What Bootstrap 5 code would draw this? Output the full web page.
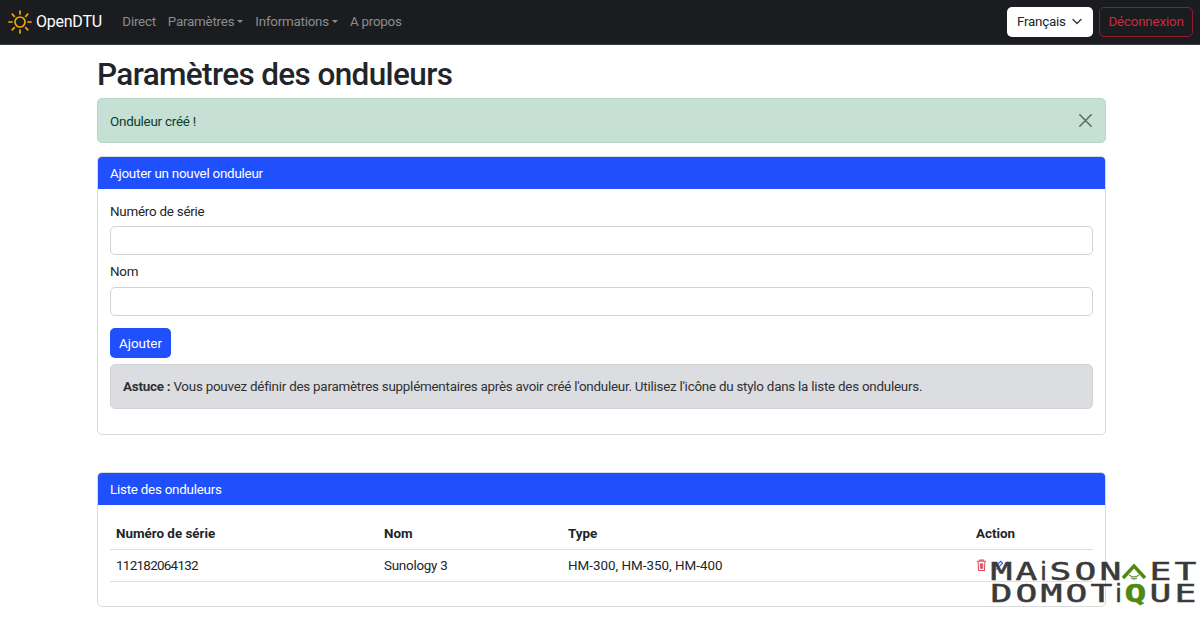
<!DOCTYPE html>
<html lang="fr">
<head>
<meta charset="utf-8">
<title>OpenDTU</title>
<link href="https://cdn.jsdelivr.net/npm/bootstrap@5.3.0/dist/css/bootstrap.min.css" rel="stylesheet">
<style>
html,body{height:626px;overflow:hidden}
body{font-family:"Roboto","Inter","Liberation Sans",sans-serif;font-size:13.4px;letter-spacing:-.24px;color:#212529;position:relative}
.top-bar{background:#1b1c20;height:44.5px;padding:0 7px 0 8px;border-bottom:1px solid #3a3b3e}
.brand-txt{color:#fff;font-size:16px;margin-left:4px;margin-right:14.5px}
.top-link{color:#8b8c8f;text-decoration:none;padding:0 6px}
.top-link.dropdown-toggle::after{margin-left:3px;border-width:.24em .24em 0 .24em;vertical-align:.2em}
.lang-sel{width:86px;height:30px;background:#fff;border-radius:5px;padding:0 11px 0 10px;color:#212529}
.logout-btn{width:94px;height:30px;margin-left:6px;border:1px solid #8e1c2c;border-radius:5px;color:#c92a3e;font-size:13.4px;letter-spacing:-.2px;padding:0}
.page-wrap{width:1009px;margin-left:97px}
.page-title{font-size:31.5px;font-weight:500;line-height:38px;margin:11px 0 4px;color:#212529;letter-spacing:-.62px}
.ok-alert{height:45px;background:#c7e0d5;border:1px solid #b5d6c8;border-radius:5px;color:#0b3d27;padding:0 12px;margin-bottom:13px}
.ok-alert>span{padding-top:4px}
.x-btn{background:none;border:0;padding:0;line-height:0;margin-right:1px}
.panel{border:1px solid #d9dadb;border-radius:5px;overflow:hidden}
.panel-head{background:#1f50fb;color:#fff;height:32px;padding:4px 12px 0;margin:0}
.panel-form{height:245px;padding:12px 12px 0}
.panel-list{height:135px;margin-top:37px}
.fld-label{display:block;line-height:22px;margin-bottom:3px}
.fld-input{display:block;height:29px;width:100%;border:1px solid #d0d3d6;border-radius:5px;margin-bottom:6px;padding:0 10px;font-size:13.4px}
.fld-input + .fld-label{margin-bottom:4px}
.add-btn{background:#1f50fb;color:#fff;border:0;border-radius:5px;width:61px;height:30px;font-size:13.4px;padding:3px 0 0;margin-top:12px;display:block}
.tip-box{background:#dcdde0;border:1px solid #d2d3d6;border-radius:5px;height:45px;margin-top:6px;padding:3px 12px 0;color:#2f3133}
.tbl-wrap{padding:13px 12px 0}
.tbl-grid{display:grid;grid-template-columns:268px 184px 408px 1fr}
.tbl-grid>div{padding:2px 6px 0;height:32px;display:flex;align-items:center;border-bottom:1px solid #dee0e2}
.tbl-grid>.hd{font-weight:700;height:32px;letter-spacing:0;border-bottom:1.5px solid #dcdde0}
.cell-num{letter-spacing:-.7px}
.cell-type{letter-spacing:0}
.action-icons{gap:6px;margin-top:-2px}
.wm{position:absolute;left:990px;top:562px;width:207px;color:#3a3a3a;font-family:"DejaVu Sans Mono","Liberation Mono",monospace;pointer-events:none;letter-spacing:0}
.wm-line{display:flex;justify-content:space-between;height:21.5px;font-size:25px;line-height:19px;-webkit-text-stroke:.5px #3a3a3a}
.wm-line span{display:block;flex:0 0 23px;width:23px;height:19px;text-align:center;overflow:visible}
.wm-line span i{display:inline-block;font-style:normal;transform:scaleX(1.45)}
.wm-line .nar{flex-basis:7px;width:7px;font-family:"Liberation Sans",sans-serif}
.wm-line .nar i{transform:none}
.wm-line .wm-green{color:#4f8a10;font-weight:700;-webkit-text-stroke:.5px #4f8a10}
.wm-house{position:absolute;left:132px;top:2px}
</style>
</head>
<body>
<nav class="top-bar d-flex align-items-center">
  <svg width="24" height="24" viewBox="0 0 24 24" fill="none" stroke="#f2a900" stroke-width="1.7" stroke-linecap="round"><circle cx="12" cy="12" r="5"/><path d="M12 1v3M12 20v3M1 12h3M20 12h3M4.2 4.2l2.1 2.1M17.7 17.7l2.1 2.1M4.2 19.8l2.1-2.1M17.7 6.3l2.1-2.1"/></svg>
  <span class="brand-txt">OpenDTU</span>
  <a class="top-link" href="#">Direct</a>
  <a class="top-link dropdown-toggle" href="#">Paramètres</a>
  <a class="top-link dropdown-toggle" href="#">Informations</a>
  <a class="top-link" href="#">A propos</a>
  <div class="ms-auto d-flex align-items-center">
    <div class="lang-sel d-flex align-items-center justify-content-between"><span>Français</span>
      <svg width="10" height="7" viewBox="0 0 10 7" fill="none" stroke="#343a40" stroke-width="1.4" stroke-linecap="round" stroke-linejoin="round"><path d="M1 1.5l4 4 4-4"/></svg></div>
    <button class="logout-btn btn" type="button">Déconnexion</button>
  </div>
</nav>
<main class="page-wrap">
  <h1 class="page-title">Paramètres des onduleurs</h1>
  <div class="ok-alert d-flex align-items-center justify-content-between">
    <span>Onduleur créé !</span>
    <button class="x-btn" type="button" aria-label="Fermer"><svg width="13" height="13" viewBox="0 0 13 13" stroke="#566b62" stroke-width="1.5" stroke-linecap="round"><path d="M.8.8l11.4 11.4M12.2.8L.8 12.2"/></svg></button>
  </div>
  <section class="panel">
    <div class="panel-head d-flex align-items-center">Ajouter un nouvel onduleur</div>
    <div class="panel-form">
      <label class="fld-label">Numéro de série</label>
      <input class="fld-input" type="text">
      <label class="fld-label">Nom</label>
      <input class="fld-input" type="text">
      <button class="add-btn" type="button">Ajouter</button>
      <div class="tip-box d-flex align-items-center"><span><b class="fw-bold">Astuce :</b> Vous pouvez définir des paramètres supplémentaires après avoir créé l'onduleur. Utilisez l'icône du stylo dans la liste des onduleurs.</span></div>
    </div>
  </section>
  <section class="panel panel-list">
    <div class="panel-head d-flex align-items-center">Liste des onduleurs</div>
    <div class="tbl-wrap">
      <div class="tbl-grid">
        <div class="hd">Numéro de série</div><div class="hd">Nom</div><div class="hd">Type</div><div class="hd">Action</div>
        <div class="cell-num">112182064132</div><div>Sunology 3</div><div class="cell-type">HM-300, HM-350, HM-400</div>
        <div><span class="action-icons d-flex">
          <svg width="11" height="12" viewBox="0 0 12 13" fill="none" stroke="#e0455a" stroke-width="1.1"><path d="M1 2.5h10M4 2.5V1h4v1.5M2.2 2.5l.6 10h6.4l.6-10M4.7 4.5v6M6 4.5v6M7.3 4.5v6"/></svg>
          <svg width="11" height="12" viewBox="0 0 12 13" fill="none" stroke="#1f50fb" stroke-width="1.1"><path d="M1.5 11.5l.6-2.6L8.5 2.5l2 2-6.4 6.4z"/></svg>
        </span></div>
      </div>
    </div>
  </section>
</main>
<div class="wm">
  <div class="wm-line"><span><i>M</i></span><span><i>A</i></span><span class="nar"><i>i</i></span><span><i>S</i></span><span><i>O</i></span><span><i>N</i></span><span></span><span><i>E</i></span><span><i>T</i></span></div>
  <div class="wm-line"><span><i>D</i></span><span><i>O</i></span><span><i>M</i></span><span><i>O</i></span><span><i>T</i></span><span class="nar"><i>i</i></span><span class="wm-green"><i>Q</i></span><span><i>U</i></span><span><i>E</i></span></div>
  <svg class="wm-house" width="24" height="17" viewBox="0 0 24 17" fill="none"><path d="M1 14L12 2l11 12" stroke="#4f8a10" stroke-width="3.4"/><path d="M7 11q5 4 10 0M9 14q3 2 6 0" stroke="#6d8f4a" stroke-width="1.3"/></svg>
</div>
<script src="https://cdn.jsdelivr.net/npm/bootstrap@5.3.0/dist/js/bootstrap.bundle.min.js"></script>
</body>
</html>
